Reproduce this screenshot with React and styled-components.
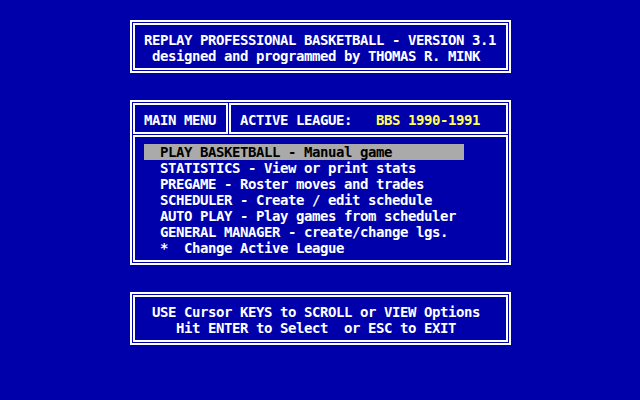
import React from 'react';
import styled, { createGlobalStyle } from 'styled-components';

const GlobalStyle = createGlobalStyle`
  html, body {
    margin: 0;
    padding: 0;
    background: #0000aa;
  }
`;

const Screen = styled.div`
  width: 640px;
  height: 400px;
  box-sizing: border-box;
  padding: 20px 0 0 130px;
  background: #0000aa;
  color: #ffffff;
  font-family: "DejaVu Sans Mono", "Liberation Mono", monospace;
  font-weight: bold;
  font-size: 14px;
  letter-spacing: -0.43px;
  line-height: 16px;
  display: flex;
  flex-direction: column;
  gap: 27px;
  overflow: hidden;
`;

// outer line of the double frame
const Frame = styled.div`
  width: 381px;
  box-sizing: border-box;
  border: 2px solid #ffffff;
  padding: 1px;
  display: flex;
  flex-direction: column;
  gap: 1px;
`;

// inner line of the double frame, holds the text rows
const Panel = styled.div`
  box-sizing: border-box;
  border: 2px solid #ffffff;
  padding: 7px 0 4px 9px;
  white-space: pre;
`;

const HeaderRow = styled.div`
  display: flex;
  gap: 1px;
`;

const HeaderCell = styled(Panel)`
  width: ${p => p.$w}px;
`;

const Line = styled.div`
  height: 16px;
`;

const League = styled.span`
  color: #ffff55;
`;

const MenuItem = styled.div`
  width: 320px;
  height: 16px;
  box-sizing: border-box;
  padding-left: 16px;
  background: ${p => (p.$active ? '#aaaaaa' : 'transparent')};
  color: ${p => (p.$active ? '#000000' : '#ffffff')};
`;

const menu = [
  'PLAY BASKETBALL - Manual game',
  'STATISTICS - View or print stats',
  'PREGAME - Roster moves and trades',
  'SCHEDULER - Create / edit schedule',
  'AUTO PLAY - Play games from scheduler',
  'GENERAL MANAGER - create/change lgs.',
  '*  Change Active League',
];

export default function App() {
  return (
    <>
      <GlobalStyle />
      <Screen>
        <Frame>
          <Panel>
            <Line>REPLAY PROFESSIONAL BASKETBALL - VERSION 3.1</Line>
            <Line> designed and programmed by THOMAS R. MINK</Line>
          </Panel>
        </Frame>

        <Frame>
          <HeaderRow>
            <HeaderCell $w={95}>
              <Line>MAIN MENU</Line>
            </HeaderCell>
            <HeaderCell $w={279}>
              <Line>
                {'ACTIVE LEAGUE:   '}
                <League>BBS 1990-1991</League>
              </Line>
            </HeaderCell>
          </HeaderRow>
          <Panel>
            {menu.map((item, i) => (
              <MenuItem key={i} $active={i === 0}>{item}</MenuItem>
            ))}
          </Panel>
        </Frame>

        <Frame>
          <Panel>
            <Line> USE Cursor KEYS to SCROLL or VIEW Options</Line>
            <Line>    Hit ENTER to Select  or ESC to EXIT</Line>
          </Panel>
        </Frame>
      </Screen>
    </>
  );
}
